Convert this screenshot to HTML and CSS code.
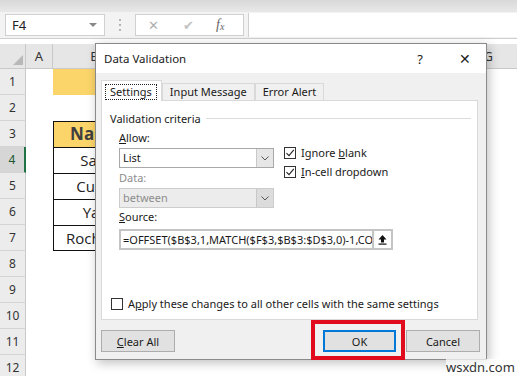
FILE: index.html
```html
<!DOCTYPE html>
<html lang="en">
<head>
  <meta charset="UTF-8">
  <title>Data Validation</title>
  <link rel="stylesheet" href="styles.css">
</head>
<body>

  <div class="topband"></div>

  <!-- barra de fórmulas -->
  <div class="formula-row">
    <div class="namebox">F4 <span class="nb-arrow"></span></div>
    <div class="dots"><i></i><i></i><i></i></div>
    <div class="fbuttons">
      <span class="fb-x">&#x2715;</span>
      <span class="fb-ok">&#x2714;</span>
      <span class="fb-fx">f<sub>x</sub></span>
    </div>
    <div class="finput"></div>
  </div>
  <div class="formula-gap"></div>

  <div class="sheet">
    <div class="row head">
      <div class="rh corner"><span class="tri"></span></div>
      <div class="ch a">A</div>
      <div class="ch b">B</div>
      <div class="ch rest"><span class="g">G</span></div>
    </div>
    <div class="row">
      <div class="rh">1</div><div class="c a"></div><div class="c b yellow wide"></div>
    </div>
    <div class="row">
      <div class="rh">2</div><div class="c a"></div><div class="c b"></div>
    </div>
    <div class="row">
      <div class="rh">3</div><div class="c a"></div><div class="c b framed yellow bold">Name</div>
    </div>
    <div class="row">
      <div class="rh sel">4</div><div class="c a"></div><div class="c b framed">Sam</div>
    </div>
    <div class="row">
      <div class="rh">5</div><div class="c a"></div><div class="c b framed">Curry</div>
    </div>
    <div class="row">
      <div class="rh">6</div><div class="c a"></div><div class="c b framed">Yao</div>
    </div>
    <div class="row">
      <div class="rh">7</div><div class="c a"></div><div class="c b framed last">Rochelle</div>
    </div>
    <div class="row"><div class="rh">8</div></div>
    <div class="row"><div class="rh">9</div></div>
    <div class="row"><div class="rh">10</div></div>
    <div class="row"><div class="rh">11</div></div>
    <div class="row"><div class="rh">12</div></div>
  </div>

  <!-- ventana de validación encima de la hoja -->
  <div class="dialog">
    <div class="titlebar">
      <span class="title">Data Validation</span>
      <span class="help">?</span>
      <span class="close">&#x2715;</span>
    </div>
    <div class="dbody">
      <div class="tabs">
        <div class="tab active"><span class="focus">Settings</span></div>
        <div class="tab">Input Message</div>
        <div class="tab">Error Alert</div>
      </div>
      <div class="panel">
        <div class="legend"><span>Validation criteria</span><i></i></div>
        <div class="criteria">
          <div class="top">
            <div class="left">
              <div class="lbl"><u>A</u>llow:</div>
              <div class="combo"><span>List</span><b><svg width="8" height="5" viewBox="0 0 8 5"><path d="M0.5 0.5 L4 4 L7.5 0.5" fill="none" stroke="#555" stroke-width="1"/></svg></b></div>
              <div class="lbl dim">Data:</div>
              <div class="combo off"><span>between</span><b><svg width="8" height="5" viewBox="0 0 8 5"><path d="M0.5 0.5 L4 4 L7.5 0.5" fill="none" stroke="#555" stroke-width="1"/></svg></b></div>
            </div>
            <div class="right">
              <div class="chk"><span class="box"><svg width="10" height="10" viewBox="0 0 10 10"><path d="M1.5 5.2 L4 7.7 L8.8 1.8" fill="none" stroke="#222" stroke-width="1.1"/></svg></span><span>Ignore <u>b</u>lank</span></div>
              <div class="chk"><span class="box"><svg width="10" height="10" viewBox="0 0 10 10"><path d="M1.5 5.2 L4 7.7 L8.8 1.8" fill="none" stroke="#222" stroke-width="1.1"/></svg></span><span><u>I</u>n-cell dropdown</span></div>
            </div>
          </div>
          <div class="lbl src"><u>S</u>ource:</div>
          <div class="source">
            <span class="stext">=OFFSET($B$3,1,MATCH($F$3,$B$3:$D$3,0)-1,COUNTA(OFFSET($B$3,1,0,20)))</span>
            <span class="refbtn"><svg width="11" height="11" viewBox="0 0 11 11"><path d="M5.5 1 L9.5 5.5 L7 5.5 L7 8.5 L4 8.5 L4 5.5 L1.5 5.5 Z" fill="#111"/><rect x="1.5" y="9.5" width="8" height="1.2" fill="#111"/></svg></span>
          </div>
        </div>
        <div class="chk apply"><span class="box"></span><span>A<u>p</u>ply these changes to all other cells with the same settings</span></div>
      </div>
      <div class="buttons">
        <button class="btn"><u>C</u>lear All</button>
        <span class="spacer"></span>
        <button class="btn ok">OK</button>
        <button class="btn">Cancel</button>
      </div>
    </div>
  </div>

  <div class="redbox"></div>
  <div class="watermark">wsxdn.com</div>

</body>
</html>
```

FILE: styles.css
```css
body {
  margin: 0;
  width: 517px;
  height: 376px;
  overflow: hidden;
  background: #fff;
  font-family: "Noto Sans", "Open Sans", sans-serif;
  position: relative;
}
.topband {
  height: 12px;
  background: linear-gradient(#d9d9d9, #e8e8e8);
}
.formula-row {
  display: flex;
  align-items: center;
  height: 26px;
  background: #f3f3f3;
  border-bottom: 1px solid #cfcfcf;
}
.namebox {
  margin-left: 5px;
  width: 100px;
  height: 22px;
  background: #fff;
  border: 1px solid #d0d0d0;
  box-sizing: border-box;
  font-size: 13px;
  line-height: 20px;
  padding-left: 6px;
  color: #222;
  position: relative;
}
.nb-arrow {
  position: absolute;
  right: 7px;
  top: 8px;
  border-left: 4px solid transparent;
  border-right: 4px solid transparent;
  border-top: 4px solid #888;
}
.dots {
  width: 30px;
  display: flex;
  flex-direction: column;
  align-items: center;
  gap: 3px;
}
.dots i {
  width: 2px;
  height: 2px;
  background: #b5b5b5;
}
.fbuttons {
  width: 109px;
  height: 22px;
  box-sizing: border-box;
  background: #fff;
  border: 1px solid #d0d0d0;
  display: flex;
  align-items: center;
  color: #b0b0b0;
}
.fb-x { margin-left: 12px; font-size: 13px; }
.fb-ok { margin-left: 24px; font-size: 13px; color: #c3c3c3; }
.fb-fx {
  margin-left: 22px;
  font-family: "Liberation Serif", serif;
  font-style: italic;
  font-size: 14px;
  color: #666;
}
.fb-fx sub { font-size: 10px; vertical-align: -1px; }
.finput {
  margin-left: 4px;
  flex: 1;
  height: 24px;
  background: #fff;
  border-left: 1px solid #d0d0d0;
}
.formula-gap {
  height: 5px;
  background: #fff;
}

/* hoja */
.row {
  display: flex;
  height: 26px;
}
.row.head {
  height: 24px;
  background: #e6e6e6;
  border-bottom: 1px solid #c9c9c9;
}
.rh {
  width: 26px;
  height: 26px;
  flex: none;
  box-sizing: border-box;
  background: #ececec;
  border-right: 1px solid #c9c9c9;
  border-bottom: 1px solid #d4d4d4;
  font-size: 12px;
  color: #333;
  text-align: center;
  line-height: 25px;
}
.rh.sel {
  background: #d6d6d6;
  border-right: 2px solid #217346;
  color: #215732;
}
.corner {
  height: 24px;
  background: #e6e6e6;
  position: relative;
  border-bottom: none;
}
.tri {
  position: absolute;
  right: 2px;
  bottom: 3px;
  border-left: 10px solid transparent;
  border-bottom: 10px solid #b8b8b8;
}
.ch {
  font-size: 13px;
  color: #333;
  text-align: center;
  line-height: 24px;
  box-sizing: border-box;
  border-right: 1px solid #c9c9c9;
}
.ch.a, .c.a { width: 27px; flex: none; }
.ch.b, .c.b { width: 84px; flex: none; }
.ch.rest { flex: 1; border-right: none; text-align: right; padding-right: 24px; }
.c {
  height: 26px;
  box-sizing: border-box;
  font-family: "Open Sans", "Noto Sans", sans-serif;
  font-size: 15px;
  color: #222;
  text-align: center;
  line-height: 24px;
}
.c.yellow { background: #fcd56a; }
.c.wide { width: 400px; }
.c.framed {
  border-top: 1px solid #111;
  border-left: 1px solid #111;
}
.c.framed.last { border-bottom: 1px solid #111; }
.c.bold { font-weight: bold; font-size: 17px; color: #404040; }

/* dialogo */
.dialog {
  position: absolute;
  left: 95px;
  top: 43px;
  width: 392px;
  height: 317px;
  box-sizing: border-box;
  border: 1px solid #8a8a8a;
  background: #f0f0f0;
  box-shadow: 2px 3px 10px rgba(0, 0, 0, 0.25);
  font-size: 11px;
  color: #1a1a1a;
}
.titlebar {
  height: 29px;
  background: #fff;
  display: flex;
  align-items: center;
  padding-left: 8px;
}
.title { font-size: 11.5px; flex: 1; }
.help { font-size: 13px; margin-right: 36px; }
.close { font-size: 14px; margin-right: 15px; color: #222; }
.dbody {
  padding: 7px 8px 0 5px;
}
.tabs {
  display: flex;
  align-items: flex-end;
  height: 20px;
  position: relative;
  z-index: 1;
}
.tab {
  height: 17px;
  box-sizing: border-box;
  border: 1px solid #d9d9d9;
  border-bottom: none;
  padding: 0 7px;
  line-height: 16px;
  background: #f0f0f0;
}
.tab.active {
  height: 21px;
  background: #fff;
  padding: 3px 4px 0 3px;
  margin-bottom: -1px;
  line-height: 14px;
}
.focus {
  display: inline-block;
  border: 1px dotted #222;
  padding: 0 4px;
}
.panel {
  height: 220px;
  box-sizing: border-box;
  background: #fff;
  border: 1px solid #d9d9d9;
  padding: 10px 6px 8px 8px;
  display: flex;
  flex-direction: column;
}
.legend {
  display: flex;
  align-items: center;
  gap: 5px;
  height: 14px;
}
.legend i {
  flex: 1;
  border-top: 1px solid #dcdcdc;
}
.criteria {
  padding-left: 9px;
}
.top {
  display: flex;
  gap: 10px;
}
.left { width: 155px; }
.lbl {
  height: 15px;
  line-height: 15px;
  margin-top: 5px;
}
.lbl.dim { color: #8d8d8d; margin-top: 2px; }
.lbl.src { margin-top: 1px; }
.combo {
  margin-top: 3px;
  height: 20px;
  box-sizing: border-box;
  border: 1px solid #a8a8a8;
  background: #fff;
  display: flex;
}
.combo span {
  flex: 1;
  padding-left: 3px;
  line-height: 18px;
}
.combo b {
  width: 16px;
  background: #e6e6e6;
  border-left: 1px solid #c8c8c8;
  display: flex;
  align-items: center;
  justify-content: center;
}
.combo.off {
  background: #ececec;
  border-color: #cccccc;
  color: #8d8d8d;
}
.combo.off b { background: #dcdcdc; }
.right {
  padding-top: 18px;
}
.chk {
  display: flex;
  align-items: center;
  gap: 5px;
  height: 19px;
}
.box {
  width: 12px;
  height: 12px;
  flex: none;
  box-sizing: border-box;
  border: 1px solid #333;
  background: #fff;
  display: flex;
  align-items: center;
  justify-content: center;
}
.source {
  margin-top: 5px;
  width: 274px;
  height: 21px;
  box-sizing: border-box;
  border: 2px solid #c4c4c4;
  background: #fff;
  display: flex;
  align-items: center;
}
.stext {
  flex: 1;
  overflow: hidden;
  white-space: nowrap;
  padding-left: 2px;
  line-height: 15px;
}
.refbtn {
  width: 19px;
  height: 17px;
  box-sizing: border-box;
  border-left: 2px solid #c4c4c4;
  display: flex;
  align-items: center;
  justify-content: center;
}
.chk.apply {
  margin-top: auto;
  margin-left: 1px;
  height: 15px;
}
.buttons {
  display: flex;
  margin-top: 10px;
  gap: 10px;
}
.spacer { flex: 1; }
.btn {
  width: 74px;
  height: 22px;
  background: #e1e1e1;
  border: 1px solid #adadad;
  font-family: inherit;
  font-size: 11px;
  color: #1a1a1a;
  padding: 0;
}
.btn.ok {
  width: 73px;
  border: 2px solid #0078d7;
}
.buttons .btn:last-child { margin-right: -2px; }
.redbox {
  position: absolute;
  left: 311px;
  top: 320px;
  width: 94px;
  height: 40px;
  box-sizing: border-box;
  border: 4px solid #e00b1c;
}
.watermark {
  position: absolute;
  left: 446px;
  top: 359px;
  font-size: 13px;
  line-height: 16px;
  color: #333;
  background: rgba(255, 255, 255, 0.7);
}
```
